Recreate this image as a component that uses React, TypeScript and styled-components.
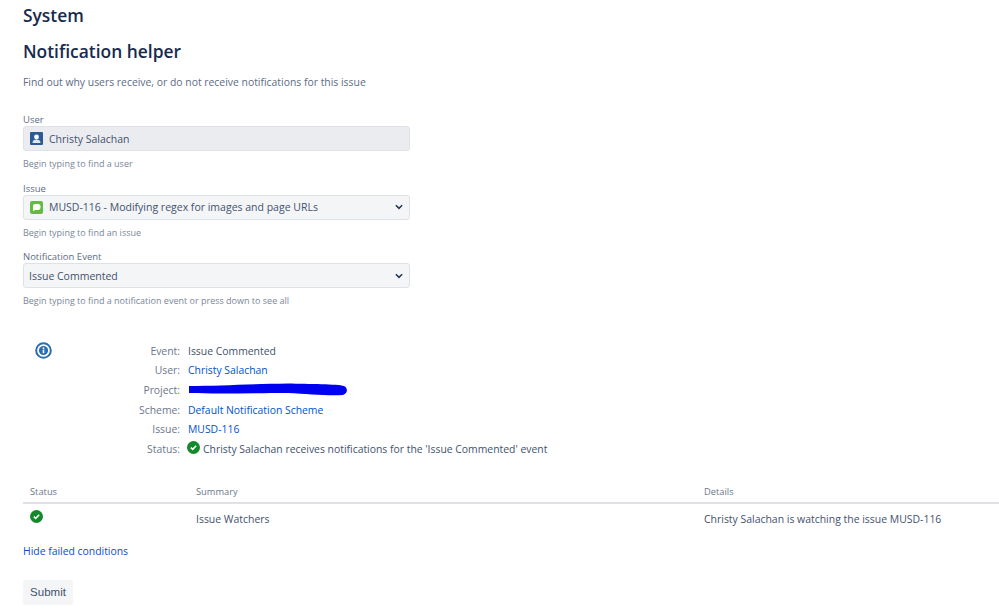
import React from "react";
import styled, { createGlobalStyle } from "styled-components";

const GlobalStyle = createGlobalStyle`
  html, body {
    margin: 0;
    padding: 0;
    background: #fff;
    overflow: hidden;
  }
  body {
    font-family: "Open Sans", "Noto Sans", sans-serif;
    color: #172b4d;
  }
`;

const Page = styled.div`
  width: 999px;
  height: 611px;
  box-sizing: border-box;
  padding: 4px 0 0 23px;
  overflow: hidden;
`;

const Title = styled.h1`
  margin: 0;
  font-size: 17.4px;
  line-height: 22px;
  font-weight: 600;
  color: #172b4d;
`;

const Heading = styled.h2`
  margin: 13px 0 0;
  font-size: 17.4px;
  line-height: 24px;
  font-weight: 600;
  color: #172b4d;
`;

const Intro = styled.p`
  margin: 11px 0 0;
  font-size: 10.4px;
  line-height: 16px;
  color: #5e6c84;
`;

const Form = styled.form`
  margin-top: 24px;
  display: flex;
  flex-direction: column;
  gap: 12.5px;
`;

const Field = styled.div`
  width: 387px;
`;

const Label = styled.label`
  display: block;
  font-size: 9.5px;
  line-height: 12px;
  font-weight: 500;
  color: #5e6c84;
`;

const Control = styled.div<{ $disabled?: boolean }>`
  height: 25px;
  box-sizing: border-box;
  display: flex;
  align-items: center;
  gap: 6px;
  padding: 0 6px 0 5px;
  border: 1px solid #dfe1e6;
  border-radius: 3px;
  background: ${({ $disabled }) => ($disabled ? "#ebecf0" : "#f4f5f7")};
  font-size: 10.5px;
  color: #42526e;
`;

const ControlIcon = styled.span`
  display: inline-flex;
  margin-left: 1px;
`;

const ControlText = styled.span`
  flex: 1;
  white-space: nowrap;
`;

const Help = styled.div`
  margin-top: 6px;
  font-size: 9px;
  line-height: 13px;
  color: #7a869a;
`;

const Summary = styled.div`
  margin-top: 34px;
  display: grid;
  grid-template-columns: 157px 1fr;
`;

const InfoCell = styled.div`
  padding: 1px 0 0 12px;
`;

const Facts = styled.dl`
  margin: 0;
  display: grid;
  grid-template-columns: max-content 1fr;
  grid-auto-rows: 19.6px;
  align-items: center;
  font-size: 10.4px;
  margin-left: -41px;
`;

const FactName = styled.dt`
  width: 41px;
  text-align: right;
  padding-right: 7px;
  justify-self: end;
  color: #6b778c;
  white-space: nowrap;
`;

const FactValue = styled.dd`
  margin: 0;
  padding-left: 1px;
  display: flex;
  align-items: center;
  gap: 3px;
  color: #42526e;
  white-space: nowrap;
`;

const Link = styled.a`
  color: #0052cc;
  text-decoration: none;
`;

const Redacted = styled.span`
  position: relative;
  display: block;
  width: 160px;
  height: 14px;
`;

const Scribble = styled.svg`
  position: absolute;
  left: 0;
  top: 0;
`;

const Conditions = styled.table`
  margin-top: 26px;
  width: 976px;
  border-collapse: collapse;
  table-layout: fixed;
  font-size: 10.45px;
  color: #42526e;
`;

const HeadCell = styled.th<{ $width: number }>`
  width: ${({ $width }) => $width}px;
  box-sizing: border-box;
  padding: 0 0 3px 7px;
  text-align: left;
  font-size: 9.3px;
  line-height: 14px;
  font-weight: 500;
  color: #6b778c;
  border-bottom: 2px solid #dfe1e6;
`;

const BodyCell = styled.td`
  padding: 0 0 0 7px;
  height: 30px;
  vertical-align: middle;
`;

const IconCell = styled(BodyCell)`
  height: auto;
  vertical-align: top;
  padding-top: 6px;
  line-height: 0;
`;

const ToggleLink = styled(Link)`
  display: block;
  margin-top: 9px;
  font-size: 10.4px;
  line-height: 16px;
`;

const Submit = styled.button`
  display: block;
  margin-top: 21px;
  width: 50px;
  height: 25px;
  padding: 0;
  border: 0;
  border-radius: 3px;
  background: #f4f5f7;
  color: #42526e;
  font-family: "Liberation Sans", Arial, sans-serif;
  font-size: 11.5px;
`;

const StatusIcon = styled.span`
  display: inline-flex;
  margin: 0 0 3px -1px;
`;

const Chevron = () => (
  <svg width="8" height="6" viewBox="0 0 9 6" fill="none">
    <path d="M1 1l3.5 3.5L8 1" stroke="#253858" strokeWidth="1.8" />
  </svg>
);

const UserAvatar = () => (
  <svg width="13" height="13" viewBox="0 0 13 13">
    <rect width="13" height="13" rx="1" fill="#2c5a94" />
    <circle cx="6.5" cy="5" r="2.4" fill="#fff" />
    <path d="M2.5 11c0-2.4 1.8-3.4 4-3.4s4 1 4 3.4z" fill="#dfe6f0" />
  </svg>
);

const IssueType = () => (
  <svg width="13" height="13" viewBox="0 0 13 13">
    <rect width="13" height="13" rx="2" fill="#65ba43" />
    <path
      d="M5 3h3.500C9.500 3 10.500 4 10.500 5.300v1.200C10.500 7.900 9.500 8.900 8.500 8.900H5.200L3 10.200V5.300C3 4 3.800 3 5 3z"
      fill="#fff"
    />
  </svg>
);

const InfoIcon = () => (
  <svg width="17" height="17" viewBox="0 0 17 17">
    <circle cx="8.5" cy="8.5" r="7.3" fill="#fff" stroke="#2c6cb0" strokeWidth="2" />
    <circle cx="8.5" cy="8.5" r="4.6" fill="#2c6cb0" />
    <rect x="7.7" y="7.6" width="1.6" height="3.6" fill="#fff" />
    <rect x="7.7" y="5.5" width="1.6" height="1.5" fill="#fff" />
  </svg>
);

const CheckIcon = () => (
  <svg width="13" height="13" viewBox="0 0 13 13">
    <circle cx="6.5" cy="6.5" r="6.5" fill="#14892c" />
    <path d="M3.8 6.700l1.900 1.700 3.500-3.600" fill="none" stroke="#fff" strokeWidth="1.6" />
  </svg>
);

export default function App() {
  return (
    <>
      <GlobalStyle />
      <Page>
        <Title>System</Title>
        <Heading>Notification helper</Heading>
        <Intro>Find out why users receive, or do not receive notifications for this issue</Intro>

        <Form>
          <Field>
            <Label>User</Label>
            <Control $disabled>
              <ControlIcon>
                <UserAvatar />
              </ControlIcon>
              <ControlText>Christy Salachan</ControlText>
            </Control>
            <Help>Begin typing to find a user</Help>
          </Field>
          <Field>
            <Label>Issue</Label>
            <Control>
              <ControlIcon>
                <IssueType />
              </ControlIcon>
              <ControlText>MUSD-116 - Modifying regex for images and page URLs</ControlText>
              <Chevron />
            </Control>
            <Help>Begin typing to find an issue</Help>
          </Field>
          <Field>
            <Label>Notification Event</Label>
            <Control>
              <ControlText>Issue Commented</ControlText>
              <Chevron />
            </Control>
            <Help>Begin typing to find a notification event or press down to see all</Help>
          </Field>
        </Form>

        <Summary>
          <InfoCell>
            <InfoIcon />
          </InfoCell>
          <Facts>
            <FactName>Event:</FactName>
            <FactValue>Issue Commented</FactValue>
            <FactName>User:</FactName>
            <FactValue>
              <Link>Christy Salachan</Link>
            </FactValue>
            <FactName>Project:</FactName>
            <FactValue>
              <Redacted>
                <Scribble width="160" height="14" viewBox="0 0 160 14">
                  <path
                    d="M1 3C30 3 60 1 100 .5c20 .5 50 .5 56 2.500 4 2 4 7-1 9-15 1-35-1-55-2C70 10 30 11 1 10z"
                    fill="#0000f0"
                  />
                </Scribble>
              </Redacted>
            </FactValue>
            <FactName>Scheme:</FactName>
            <FactValue>
              <Link>Default Notification Scheme</Link>
            </FactValue>
            <FactName>Issue:</FactName>
            <FactValue>
              <Link>MUSD-116</Link>
            </FactValue>
            <FactName>Status:</FactName>
            <FactValue>
              <StatusIcon>
                <CheckIcon />
              </StatusIcon>
              Christy Salachan receives notifications for the 'Issue Commented' event
            </FactValue>
          </Facts>
        </Summary>

        <Conditions>
          <thead>
            <tr>
              <HeadCell $width={166}>Status</HeadCell>
              <HeadCell $width={508}>Summary</HeadCell>
              <HeadCell $width={302}>Details</HeadCell>
            </tr>
          </thead>
          <tbody>
            <tr>
              <IconCell>
                <CheckIcon />
              </IconCell>
              <BodyCell>Issue Watchers</BodyCell>
              <BodyCell>Christy Salachan is watching the issue MUSD-116</BodyCell>
            </tr>
          </tbody>
        </Conditions>

        <ToggleLink>Hide failed conditions</ToggleLink>
        <Submit type="button">Submit</Submit>
      </Page>
    </>
  );
}
